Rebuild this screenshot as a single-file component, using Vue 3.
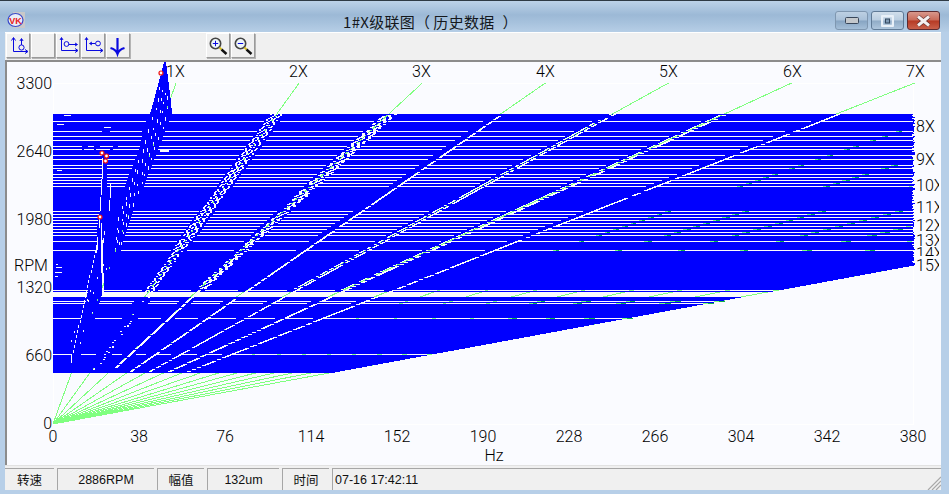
<template>
  <div class="window">
    <div class="titlebar">
      <svg class="logo" width="18" height="18" viewBox="0 0 18 18">
        <rect x="6" y="1" width="12" height="16" fill="#c9c9c9" />
        <ellipse cx="8.5" cy="9" rx="7.5" ry="6.5" fill="#e8eef8" stroke="#3a48c8" stroke-width="1.2" />
        <text x="8.5" y="12.5" class="logo-text">VK</text>
      </svg>
      <div class="title">1#X级联图<span class="open">（</span>历史数据<span class="shut">）</span></div>
      <div class="win-btns">
        <div class="win-btn">
          <svg width="14" height="7" viewBox="0 0 14 7"><rect x="0.5" y="0.5" width="13" height="6" rx="1" fill="#c4c8cc" stroke="#39475a" /></svg>
        </div>
        <div class="win-btn active">
          <svg width="13" height="12" viewBox="0 0 13 12">
            <rect x="1" y="1" width="11" height="10" rx="1" fill="none" stroke="#e8f0f8" stroke-width="2.4" />
            <rect x="4.5" y="4" width="4" height="4" fill="#7f9ab5" stroke="#33475c" />
          </svg>
        </div>
        <div class="win-btn close">
          <svg width="15" height="12" viewBox="0 0 15 12">
            <path d="M2 1.5 L13 10.5 M13 1.5 L2 10.5" stroke="#5a2a2a" stroke-width="4.2" />
            <path d="M2 1.5 L13 10.5 M13 1.5 L2 10.5" stroke="#f4f0f0" stroke-width="3" />
          </svg>
        </div>
      </div>
    </div>

    <div class="client">
      <div class="toolbar">
        <div class="group">
          <button class="tool">
            <svg width="22" height="23" viewBox="0 0 22 23">
              <path class="ink" d="M6.5 4V17.5H20.5M4.5 6.5L6.5 3.5L8.5 6.5M18 15.5L21 17.5L18 19.5" />
              <circle class="ink" cx="14.5" cy="13.5" r="2.6" />
              <path class="ink" d="M14.5 11V5M12.9 7L14.5 4.5L16.1 7" />
            </svg>
          </button>
          <button class="tool"></button>
          <button class="tool">
            <svg width="22" height="23" viewBox="0 0 22 23">
              <path class="ink" d="M4.5 4V16.5H20.5M3 6L4.5 3.5L6 6M18 14.5L21 16.5L18 18.5" />
              <circle class="ink" cx="9.5" cy="10" r="2.4" />
              <path class="ink" d="M12 10.5H20M18 9L20.5 10.5L18 12" />
            </svg>
          </button>
          <button class="tool">
            <svg width="22" height="23" viewBox="0 0 22 23">
              <path class="ink" d="M4.5 4V16.5H20.5M3 6L4.5 3.5L6 6M18 14.5L21 16.5L18 18.5" />
              <circle class="ink" cx="16" cy="9.5" r="2.4" />
              <path class="ink" d="M13.5 9.5H8M10 8L7.5 9.5L10 11" />
            </svg>
          </button>
          <button class="tool">
            <svg width="22" height="23" viewBox="0 0 22 23">
              <path class="ink heavy" d="M10.5 4V20M3.5 14C7 15 9.5 17 10.5 20C11.5 17 14 15 17.5 14" />
            </svg>
          </button>
        </div>
        <div class="group zoom">
          <button class="tool">
            <svg width="22" height="23" viewBox="0 0 22 23">
              <circle cx="8.5" cy="9.5" r="5.2" fill="#eef6f8" stroke="#444" stroke-width="1.6" />
              <path class="ink" d="M5.8 9.5H11.2M8.5 6.8V12.2" />
              <path d="M12.5 13.5L14.5 15.5" stroke="#d8c020" stroke-width="2" />
              <path d="M14.5 15.5L19.5 20" stroke="#111" stroke-width="2.4" />
            </svg>
          </button>
          <button class="tool">
            <svg width="22" height="23" viewBox="0 0 22 23">
              <circle cx="8.5" cy="9.5" r="5.2" fill="#eef6f8" stroke="#444" stroke-width="1.6" />
              <path class="ink" d="M5.8 9.5H11.2" />
              <path d="M12.5 13.5L14.5 15.5" stroke="#d8c020" stroke-width="2" />
              <path d="M14.5 15.5L19.5 20" stroke="#111" stroke-width="2.4" />
            </svg>
          </button>
        </div>
      </div>

      <div class="chart">
        <svg class="plot" width="934" height="403" viewBox="7 62 934 403">
          <rect x="53.5" y="83.5" width="860" height="341" fill="none" stroke="#ffffff" />
          <line
            v-for="l in greenLines"
            :key="l.n"
            :x1="X0"
            :y1="Y0"
            :x2="l.x"
            :y2="l.y"
            stroke="#80ff80"
            shape-rendering="crispEdges"
          />
          <path :d="bluePath" fill="#0000ff" shape-rendering="crispEdges" />
          <path :d="darkGreen" fill="#12b04a" shape-rendering="crispEdges" />
          <circle v-for="(m, i) in markers" :key="i" :cx="m[0]" :cy="m[1]" r="2" fill="#fff" stroke="#f01010" stroke-width="1.2" />

          <text v-for="t in yTicks" :key="t.v" x="52" :y="t.y" class="lbl end">{{ t.v }}</text>
          <text x="14" y="271" class="lbl">RPM</text>
          <text v-for="t in xTicks" :key="t.v" :x="t.x" y="442" class="lbl mid">{{ t.v }}</text>
          <text x="494" y="461" class="lbl mid">Hz</text>

          <text v-for="l in topLabels" :key="l.n" :x="l.x" y="77" class="lbl">{{ l.n }}X</text>
          <g v-for="l in sideLabels" :key="l.n">
            <rect x="915" :y="l.top" width="26" height="20" fill="#fafbff" />
            <text x="916" :y="l.y" class="lbl">{{ l.n }}X</text>
          </g>
          <rect x="939" y="120" width="2" height="160" fill="#fafbff" />
        </svg>
      </div>

      <div class="status">
        <div class="cell" style="width: 49px">转速</div>
        <div class="cell" style="width: 97px">2886RPM</div>
        <div class="cell" style="width: 47px">幅值</div>
        <div class="cell" style="width: 72px">132um</div>
        <div class="cell" style="width: 47px">时间</div>
        <div class="cell last">07-16 17:42:11</div>
        <svg class="grip" width="14" height="14" viewBox="0 0 14 14">
          <path d="M1 14L14 1M5 14L14 5M9 14L14 9" stroke="#a8a8a8" stroke-width="1.2" />
        </svg>
      </div>
    </div>
  </div>
</template>

<script setup>
const X0 = 53
const Y0 = 424
const PER_X = 123.1
const RIGHT = 913

// screen x of the nX order line at screen y
const lineX = (n, y) => X0 + ((Y0 - y) / 341) * PER_X * n

const greenLines = []
for (let n = 1; n <= 15; n++) {
  if (n <= 7) greenLines.push({ n, x: X0 + PER_X * n, y: 83 })
  else greenLines.push({ n, x: RIGHT, y: Y0 - 2382 / n })
}

const yTicks = [3300, 2640, 1980, 1320, 660, 0].map((v) => ({ v, y: Y0 + 5 - (v * 68) / 660 }))
const xTicks = [0, 38, 76, 114, 152, 190, 228, 266, 304, 342, 380].map((v) => ({ v, x: X0 + (v * 860) / 380 }))
const topLabels = [166, 289, 412, 536, 659, 783, 906].map((x, i) => ({ n: i + 1, x }))
const sideLabels = [8, 9, 10, 11, 12, 13, 14, 15].map((n) => {
  const y = Y0 - 2382 / n + 5.5
  return { n, y, top: n === 14 ? 248 : n === 15 ? 256 : n === 13 ? 234 : y - 13 }
})
const markers = [[161, 73], [102, 153], [106.5, 156], [105.5, 161], [100, 217]]

// small seeded generator so the picture stays the same between runs
let seed = 4711
const rnd = () => {
  seed = (seed * 16807) % 2147483647
  return seed / 2147483647
}

function lerp(table, y) {
  if (y <= table[0][0]) return table[0][1]
  for (let i = 1; i < table.length; i++) {
    if (y <= table[i][0]) {
      const [y0, x0] = table[i - 1]
      const [y1, x1] = table[i]
      return x0 + ((y - y0) / (y1 - y0)) * (x1 - x0)
    }
  }
  return table[table.length - 1][1]
}

// edges of the thick 1X ridge and of the vertical resonance column
const ridgeL = [[62, 164], [103, 153], [113, 150], [127, 143], [147, 140], [177, 128], [197, 122], [215, 116], [373, 100]]
const ridgeR = [[62, 166], [93, 170], [113, 172], [127, 167], [157, 155], [183, 145], [210, 133], [240, 123], [250, 121], [290, 103], [301, 100], [318, 95], [354, 81], [373, 78]]
const colA = [[200, 100], [211, 100], [217, 98], [241, 96.6], [250, 95], [290, 88], [301, 86], [318, 81], [354, 71], [373, 66]]

const rows = [
  121, 131, 136, 140, 146, 149, 155, 159, 165, 168, 174, 177, 180, 183, 186,
  211, 214, 217, 220, 223, 226, 229, 232, 235, 241, 250,
  290, 292, 293, 294, 295, 296, 301, 303, 318, 354,
]

const holes = new Map()
function hole(x0, x1, y, h = 1) {
  for (let i = 0; i < h; i++) {
    if (!holes.has(y + i)) holes.set(y + i, [])
    holes.get(y + i).push([Math.round(x0), Math.round(x1)])
  }
}

function rowCuts(y) {
  const cuts = []
  if (y < 150) {
    cuts.push([lerp(ridgeL, y), lerp(ridgeR, y)])
    if (y === 131) cuts.push([102, 110])
    if (y === 146) cuts.push([82, 88], [94, 100], [113, 118])
    if (y === 149) cuts.push([82, 84], [94, 96], [110, 113])
  } else if (y < 200) {
    cuts.push([102, 107], [lerp(ridgeL, y), lerp(ridgeR, y)])
  } else {
    cuts.push([lerp(colA, y), lerp(ridgeR, y)])
  }
  // every order ridge interrupts the row
  cuts.push([lineX(2, y) - 8, lineX(2, y) + 8])
  cuts.push([lineX(3, y) - 7, lineX(3, y) + 7])
  cuts.push([lineX(4, y) - 8, lineX(4, y)])
  cuts.push([lineX(5, y) - 8, lineX(5, y) + 2])
  cuts.push([lineX(6, y) - 8, lineX(6, y) + 2])
  cuts.push([lineX(7, y) - 8, lineX(7, y)])
  return cuts.sort((a, b) => a[0] - b[0])
}

const edgeAt = (y) => Math.min(RIGHT + Math.round(rnd() * 3 - 1), lineX(15, y))

for (const y of rows) {
  if (y >= 292 && y <= 296) {
    // the wide band is only broken by the first ridges
    hole(X0, lerp(colA, y), y)
    hole(lerp(ridgeR, y), RIGHT, y)
    continue
  }
  let from = X0
  for (const [a, b] of rowCuts(y)) {
    if (a > from) hole(from, a, y)
    from = Math.max(from, b)
  }
  hole(from, RIGHT, y)
}

// loose dashes of the map
hole(64, 71, 115)
hole(57, 64, 124)
hole(104, 111, 127)
hole(57, 62, 170)
hole(160, 169, 150, 2)
hole(56, 58, 264)
hole(56, 62, 267)
hole(55, 62, 272)
hole(55, 58, 276)

// the white cracks along the resonance column
const cracks = [
  [102, 158, 179], [101, 179, 195], [100, 197, 211], [99, 217, 228], [97, 237, 250], [96, 245, 253],
  [110, 184, 198], [109, 200, 211], [104, 231, 235], [101, 223, 245], [103, 238, 243],
]
for (const [x, y0, y1] of cracks) hole(x, x + 1, y0, y1 - y0)
hole(101, 103, 240, 33)
hole(102, 104, 273, 23)
hole(71, 72, 354, 9)

// dashed left flank running down to the start of the ridge
for (let y = 250; y < 354; y += 5) hole(95 - ((y - 250) * 23) / 104, 96 - ((y - 250) * 23) / 104, y, 3)

// ticks inside the 1X ridge, a little uneven like the measured data
for (let k = 1; k <= 4; k++) {
  for (let y = 84 + k * 3; y < 250; y += 8 + Math.round(rnd() * 4)) {
    const l = lerp(ridgeL, y)
    const r = lerp(ridgeR, y)
    const x = l + ((r - l) * k) / 5 + rnd() * 2 - 1
    if (r - l > 4) hole(x, x + 1, y, 2 + Math.round(rnd() * 2))
  }
}
for (let i = 0; i < 16; i++) {
  const y = 255 + Math.round(rnd() * 90)
  const x = lineX(1, y) - 14 + rnd() * 14
  hole(x, x + 1, y, 2)
}

// lacy ridges: several parallel, broken pixel lines along an order line
function lace(n, y0, y1, offsets, p, wobble = 0) {
  const w = Math.ceil((PER_X * n) / 341) + 1
  for (let y = y0; y < y1; y++) {
    const off = typeof offsets === 'function' ? offsets(y) : offsets
    const chance = typeof p === 'function' ? p(y) : p
    for (const o of off) {
      if (rnd() < chance) {
        const x = lineX(n, y) + o + wobble * Math.sin(y * 1.3 + o)
        hole(x, x + w, y)
      }
    }
  }
}
lace(2, 114, 295, (y) => (y < 250 ? [-6, -3, 0, 3] : [-4, -1, 2]), 0.72, 0.9)
lace(2, 295, 372, [0, 3], 0.16)
lace(3, 114, 290, (y) => (y < 200 ? [-5, -2, 1, 4] : [-3, 0, 3]), (y) => (y < 200 ? 0.72 : 0.6), 0.9)
lace(3, 290, 368, [0], 0.9)
lace(4, 116, 270, [0], 0.9)
lace(4, 270, 372, [0], 0.85)
lace(5, 114, 290, [-4, 0], 0.78)
lace(5, 290, 372, [0], 0.85)
lace(6, 114, 290, [-4, 0], 0.72)
lace(6, 290, 372, [0], 0.75)
lace(7, 114, 372, [0], 0.8)

// blue map: one run of pixels per screen row, skipping the holes
let blue = ''
for (let y = 62; y < 373; y++) {
  let a, b
  if (y < 114) {
    a = Math.round(lerp(ridgeL, y))
    b = Math.round(lerp(ridgeR, y))
  } else {
    a = X0
    b = Math.round(edgeAt(y))
  }
  const list = (holes.get(y) || []).slice().sort((p, q) => p[0] - q[0])
  let from = a
  for (const [h0, h1] of list) {
    if (h0 > from && from < b) blue += `M${from} ${y}H${Math.min(h0, b)}V${y + 1}H${from}Z`
    from = Math.max(from, h1)
  }
  if (from < b) blue += `M${from} ${y}H${b}V${y + 1}H${from}Z`
}
const bluePath = blue

// where the high orders cross a thin row they read as dark green specks
let dark = ''
for (const y of rows) {
  if (y >= 290 && y <= 296) continue
  for (let n = 8; n <= 15; n++) {
    const x = Math.round(lineX(n, y))
    if (x < 900 && x > 500) dark += `M${x} ${y}h${Math.ceil((PER_X * n) / 341)}v1h-${Math.ceil((PER_X * n) / 341)}z`
  }
}
const darkGreen = dark
</script>

<style scoped>
.window {
  width: 949px;
  height: 494px;
  display: flex;
  flex-direction: column;
  background: #b7cfe8;
  border-top: 1px solid #2e3a44;
  box-sizing: border-box;
  overflow: hidden;
}
.titlebar {
  height: 31px;
  flex: none;
  display: flex;
  align-items: center;
  padding-left: 7px;
  padding-right: 9px;
  background: linear-gradient(#bcd2e8, #9cb9d6 45%, #a7c2dd 70%, #b6cee6);
}
.logo {
  flex: none;
  margin-top: 6px;
}
.logo-text {
  font: bold 9px "Liberation Sans", sans-serif;
  fill: #e82020;
  text-anchor: middle;
}
.title {
  margin-left: 318px;
  margin-top: 10px;
  font: 15px "Noto Sans CJK SC", sans-serif;
  letter-spacing: 0.3px;
  color: #14181c;
  white-space: nowrap;
}
.open {
  margin-right: 3px;
}
.shut {
  margin-left: 8px;
}
.win-btns {
  margin-left: auto;
  margin-top: 8px;
  display: flex;
  gap: 3px;
}
.win-btn {
  width: 33px;
  height: 19px;
  box-sizing: border-box;
  border: 1px solid #7f97b0;
  border-radius: 3px;
  display: flex;
  align-items: center;
  justify-content: center;
  background: linear-gradient(#bdd0e3, #a8c0d8 48%, #86a4c2 52%, #a5bfd8);
}
.win-btn.active {
  border-color: #5f7a96;
  background: linear-gradient(#d0deeb, #b9cde0 48%, #8fabc6 52%, #aec6dd);
}
.win-btn.close {
  border-color: #5c2b30;
  background: linear-gradient(#d8988c, #c96a58 48%, #b63a24 52%, #c9604a);
}
.client {
  flex: 1;
  display: flex;
  flex-direction: column;
  margin: 0 8px 4px 5px;
  background: #f0f0f0;
  min-height: 0;
}
.toolbar {
  height: 28px;
  flex: none;
  box-sizing: border-box;
  border-top: 1px solid #fff;
  padding-left: 1px;
  display: flex;
  align-items: flex-start;
}
.group {
  display: flex;
  gap: 1px;
}
.zoom {
  margin-left: 76px;
}
.tool {
  width: 24px;
  height: 25px;
  padding: 0;
  box-sizing: border-box;
  border: 1px solid;
  border-color: #fff #9a9a9a #9a9a9a #fff;
  box-shadow: 1px 1px 0 #b4b4b4;
  background: #f0f0f0;
  display: flex;
  align-items: center;
  justify-content: center;
}
.ink {
  fill: none;
  stroke: #0a0ae0;
  stroke-width: 1;
}
.heavy {
  stroke-width: 2.2;
}
.chart {
  height: 405px;
  flex: none;
  box-sizing: border-box;
  border-top: 2px solid #8c8c8c;
  border-left: 2px solid #8c8c8c;
  background: #fafbff;
}
.plot {
  display: block;
}
.lbl {
  font: 300 16px Roboto, "Liberation Sans", sans-serif;
  fill: #000;
}
.end {
  text-anchor: end;
}
.mid {
  text-anchor: middle;
}
.status {
  height: 25px;
  flex: none;
  box-sizing: border-box;
  border-top: 1px solid #e2e2e2;
  padding-top: 2px;
  display: flex;
  gap: 3px;
  position: relative;
  font: 12.5px "Liberation Sans", "Noto Sans CJK SC", sans-serif;
  color: #111;
}
.cell {
  box-sizing: border-box;
  border-top: 1px solid #a6a6a6;
  border-left: 1px solid #a6a6a6;
  display: flex;
  align-items: center;
  justify-content: center;
  white-space: nowrap;
}
.cell:first-child {
  border-left: none;
}
.cell.last {
  flex: 1;
  justify-content: flex-start;
  padding-left: 2px;
}
.grip {
  position: absolute;
  right: 0;
  bottom: 0;
}
</style>
